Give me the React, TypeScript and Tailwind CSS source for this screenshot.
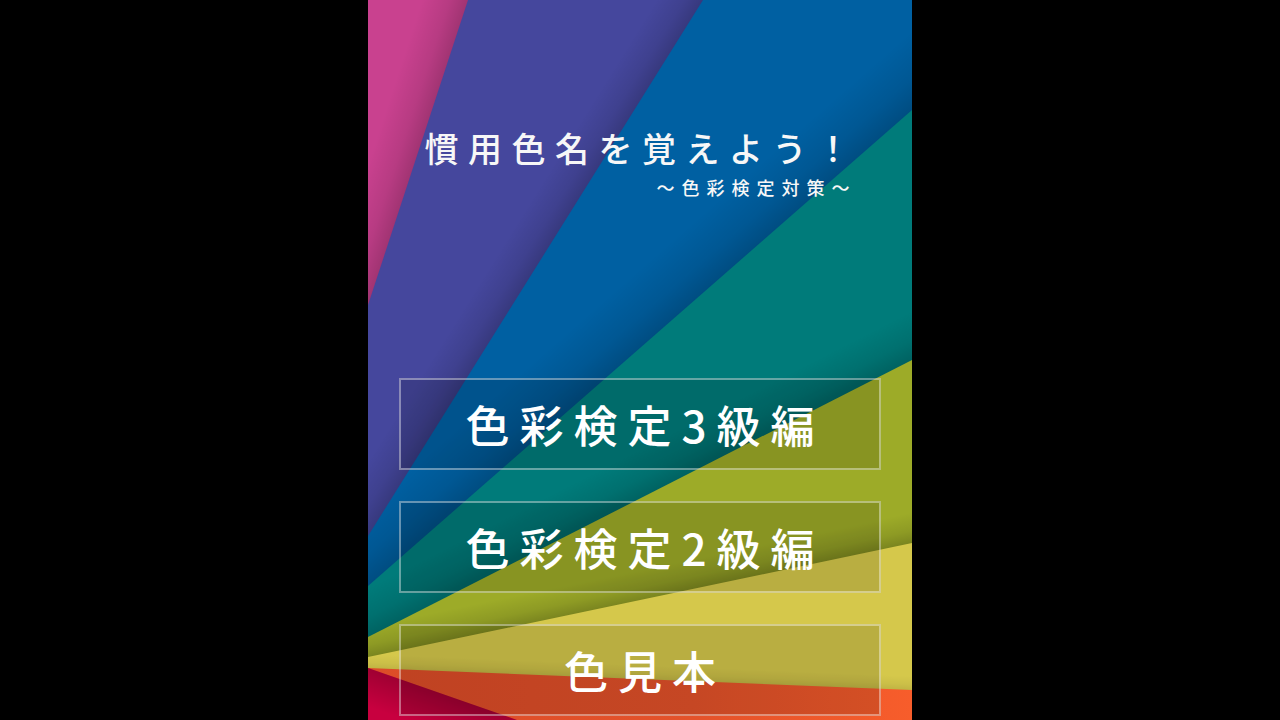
type Pt = [number, number];

const W = 544;
const H = 720;

// boundaries between the rays, each from its right/top end to the left edge
const LINES: [Pt, Pt][] = [
  [[100, 0], [0, 305]],
  [[335, 0], [0, 536]],
  [[544, 110], [0, 586]],
  [[544, 360], [0, 637]],
  [[544, 543], [0, 657]],
  [[544, 690], [0, 668]],
];

const RAYS = [
  {color: '#c9418f', shade: 0.2, width: 44},
  {color: '#45479d', shade: 0.2, width: 40},
  {color: '#0060a2', shade: 0.2, width: 60},
  {color: '#007b7a', shade: 0.2, width: 44},
  {color: '#9dab28', shade: 0.22, width: 30},
  {color: '#d5c84b', shade: 0.1, width: 14},
];

function below([a, b]: [Pt, Pt]) {
  const pts: Pt[] = [a];
  if (a[1] === 0) pts.push([W, 0]);
  pts.push([W, H], [0, H], b);
  return pts.map((p) => p.join(',')).join(' ');
}

function shadeAxis([a, b]: [Pt, Pt], w: number) {
  const dx = b[0] - a[0];
  const dy = b[1] - a[1];
  const len = Math.hypot(dx, dy);
  let nx = dy / len;
  let ny = -dx / len;
  if (ny > 0) {
    nx = -nx;
    ny = -ny;
  }
  const mx = (a[0] + b[0]) / 2;
  const my = (a[1] + b[1]) / 2;
  return {x1: mx, y1: my, x2: mx + nx * w, y2: my + ny * w};
}

function Rays() {
  return (
    <svg className="absolute inset-0" width={W} height={H} viewBox={`0 0 ${W} ${H}`}>
      <defs>
        {LINES.map((l, i) => (
          <linearGradient key={i} id={`sh${i}`} gradientUnits="userSpaceOnUse" {...shadeAxis(l, RAYS[i].width)}>
            <stop offset="0" stopColor="#000" stopOpacity={RAYS[i].shade} />
            <stop offset="0.4" stopColor="#000" stopOpacity={RAYS[i].shade * 0.45} />
            <stop offset="1" stopColor="#000" stopOpacity="0" />
          </linearGradient>
        ))}
        <linearGradient id="orange" x1="0" y1="0" x2="1" y2="0">
          <stop offset="0" stopColor="#dc4c28" />
          <stop offset="0.6" stopColor="#e4522a" />
          <stop offset="1" stopColor="#f75d2b" />
        </linearGradient>
        <linearGradient id="redsh" gradientUnits="userSpaceOnUse" x1="60" y1="690" x2="48" y2="724">
          <stop offset="0" stopColor="#000" stopOpacity="0.2" />
          <stop offset="1" stopColor="#000" stopOpacity="0" />
        </linearGradient>
      </defs>

      <rect width={W} height={H} fill={RAYS[0].color} />
      <rect width={W} height={H} fill="url(#sh0)" />
      {LINES.slice(0, 5).map((l, i) => (
        <g key={i}>
          <polygon points={below(l)} fill={RAYS[i + 1].color} />
          <polygon points={below(l)} fill={`url(#sh${i + 1})`} />
        </g>
      ))}
      <polygon points={below(LINES[5])} fill="url(#orange)" />
      <polygon points="0,668 149,720 0,720" fill="#c8003f" />
      <polygon points="0,668 149,720 0,720" fill="url(#redsh)" />
    </svg>
  );
}

const BUTTONS = ['色彩検定3級編', '色彩検定2級編', '色見本'];

export default function App() {
  return (
    <div className="w-full h-[720px] bg-black flex justify-center font-['Noto_Sans_CJK_JP',sans-serif]">
      <div className="relative w-[544px] h-[720px] overflow-hidden">
        <Rays />

        <div className="relative flex flex-col items-center pt-[131px]">
          <div className="flex flex-col text-[#f7f7f7] pl-[4px]">
            <h1 className="text-[34px] leading-none tracking-[9.5px] font-medium">慣用色名を覚えよう！</h1>
            <p className="mt-[13px] mr-[3px] text-right text-[18px] leading-none tracking-[7px] font-medium">～色彩検定対策～</p>
          </div>
        </div>

        <div className="relative flex flex-col gap-[31px] px-[31px] mt-[182px]">
          {BUTTONS.map((b) => (
            <button
              key={b}
              className="h-[92px] flex items-center justify-center border-2 border-white/40 bg-black/[0.13] text-white text-[44px] leading-none tracking-[10px] pl-[10px] font-medium"
            >
              {b}
            </button>
          ))}
        </div>
      </div>
    </div>
  );
}
